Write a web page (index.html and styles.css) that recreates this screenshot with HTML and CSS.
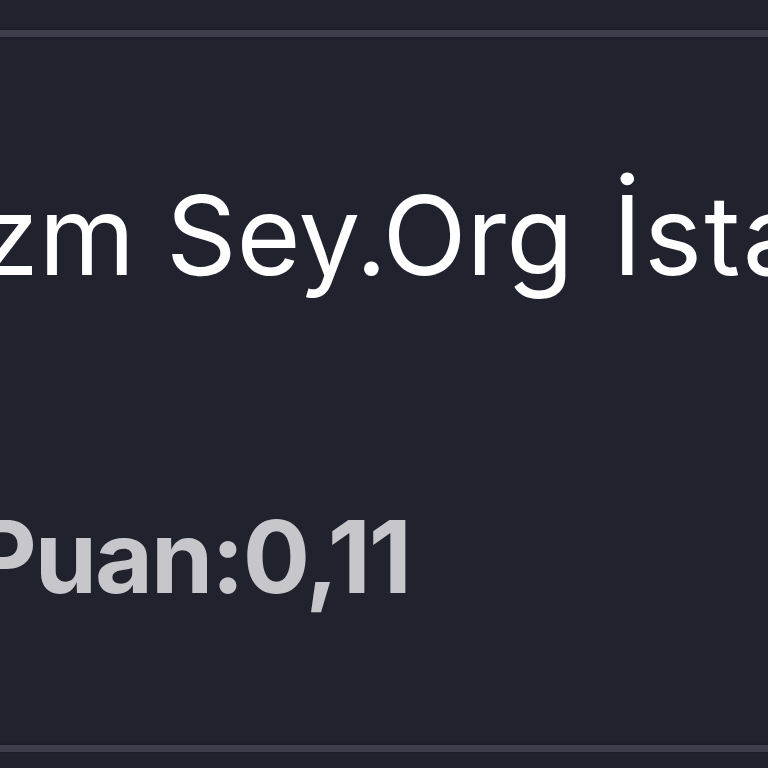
FILE: index.html
```html
<!DOCTYPE html>
<html lang="tr">
<head>
    <meta charset="UTF-8">
    <meta name="viewport" content="width=device-width, initial-scale=1.0">
    <title>Sey.Org İstatistik</title>
    <link rel="stylesheet" href="styles.css">
</head>
<body>
    <div class="card">
        <div class="rule"></div>
        <div class="card-body">
            <h1 class="title">zm Sey.Org <span class="title-tail">İstatistik</span></h1>
            <div class="score">Puan:0,11</div>
        </div>
        <div class="rule"></div>
    </div>
</body>
</html>
```
FILE: styles.css
```css
body {
    margin: 0;
    padding: 0;
    background-color: #20222e;
    font-family: Inter, Lato, sans-serif;
    overflow: hidden;
}

.card {
    height: 768px;
    box-sizing: border-box;
    padding: 30px 0 16px;
    display: flex;
    flex-direction: column;
    overflow: hidden;
}

.rule {
    height: 7px;
    background-color: #3d3f4d;
    box-shadow: 0 0 3px rgba(20, 20, 28, 0.8);
    flex-shrink: 0;
}

.card-body {
    flex: 1;
    display: flex;
    flex-direction: column;
}

.title {
    margin: 143px 0 0 -22px;
    font-size: 110px;
    font-weight: 400;
    line-height: 1;
    color: #ffffff;
    white-space: nowrap;
}

.title-tail {
    margin-left: 8px;
    letter-spacing: 2px;
}

.score {
    margin: 217px 0 0 -28px;
    font-size: 100px;
    font-weight: 700;
    line-height: 1;
    letter-spacing: -2px;
    color: #c6c6cb;
    white-space: nowrap;
}
```
